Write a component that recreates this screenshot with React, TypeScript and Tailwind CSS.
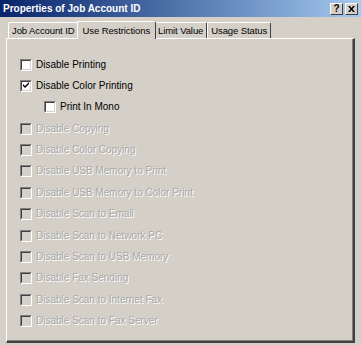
import React from 'react';

const options = [
  { label: 'Disable Printing', checked: false, enabled: true, indent: false },
  { label: 'Disable Color Printing', checked: true, enabled: true, indent: false },
  { label: 'Print In Mono', checked: false, enabled: true, indent: true },
  { label: 'Disable Copying', checked: false, enabled: false, indent: false },
  { label: 'Disable Color Copying', checked: false, enabled: false, indent: false },
  { label: 'Disable USB Memory to Print', checked: false, enabled: false, indent: false },
  { label: 'Disable USB Memory to Color Print', checked: false, enabled: false, indent: false },
  { label: 'Disable Scan to Email', checked: false, enabled: false, indent: false },
  { label: 'Disable Scan to Network PC', checked: false, enabled: false, indent: false },
  { label: 'Disable Scan to USB Memory', checked: false, enabled: false, indent: false },
  { label: 'Disable Fax Sending', checked: false, enabled: false, indent: false },
  { label: 'Disable Scan to Internet Fax', checked: false, enabled: false, indent: false },
  { label: 'Disable Scan to Fax Server', checked: false, enabled: false, indent: false },
];

const tabs = ['Job Account ID', 'Use Restrictions', 'Limit Value', 'Usage Status'];

const CheckBox: React.FC<{ checked: boolean; enabled: boolean }> = ({ checked, enabled }) => (
  <div className="w-[12px] h-[12px] border-t border-l border-[#808080] border-r border-b border-r-white border-b-white shrink-0">
    <div
      className={`w-full h-full border-t border-l border-[#404040] border-r border-b border-r-[#d4d0c8] border-b-[#d4d0c8] flex items-center justify-center ${
        enabled ? 'bg-white' : 'bg-[#d4d0c8]'
      }`}
    >
      {checked && (
        <svg width="7" height="7" viewBox="0 0 7 7">
          <path d="M0 2 L2 4 L6 0 L6 2 L2 6 L0 4 Z" fill="#000" />
        </svg>
      )}
    </div>
  </div>
);

export default function App() {
  return (
    <div className="w-[361px] h-[345px] bg-[#d4d0c8] flex flex-col overflow-hidden" style={{ fontFamily: '"Liberation Sans", Arial, sans-serif' }}>
      {/* title bar */}
      <div className="h-[17px] bg-gradient-to-r from-[#0a246a] to-[#a6caf0] flex items-center justify-between pl-[3px] pr-[3px] shrink-0">
        <span className="text-white text-[10px] font-bold leading-none">Properties of Job Account ID</span>
        <div className="flex gap-[2px]">
          {['?', '×'].map((c) => (
            <div
              key={c}
              className="w-[13px] h-[12px] bg-[#d4d0c8] border-t border-l border-white border-r border-b border-r-[#404040] border-b-[#404040] flex items-center justify-center text-[10px] font-bold text-black leading-none"
            >
              {c === '×' ? (
                <svg width="7" height="6" viewBox="0 0 7 6">
                  <path d="M0 0 L2 0 L3.5 2 L5 0 L7 0 L4.5 3 L7 6 L5 6 L3.5 4 L2 6 L0 6 L2.5 3 Z" fill="#000" />
                </svg>
              ) : (
                c
              )}
            </div>
          ))}
        </div>
      </div>

      {/* tabs */}
      <div className="flex items-end pl-[8px] mt-[3px] h-[18px] shrink-0 relative z-10">
        {tabs.map((t, i) => {
          const active = i === 1;
          return (
            <div
              key={t}
              className={`flex items-center border-t border-l border-white border-r border-r-[#404040] rounded-t-[2px] text-[9.5px] tracking-[-0.1px] text-black leading-none ${
                active ? 'h-[18px] px-[5px] -mb-px bg-[#d4d0c8] -mx-[2px] relative z-10' : 'h-[16px] px-[3px]'
              }`}
            >
              {t}
            </div>
          );
        })}
      </div>

      {/* panel */}
      <div className="flex-1 mx-[6px] mb-[2px] border-t border-l border-white border-r-2 border-b-2 border-r-[#404040] border-b-[#404040]">
        <div className="h-full border-r border-b border-[#808080] pt-[19px] pl-[13px] flex flex-col gap-[8.4px]">
          {options.map((o) => (
            <div key={o.label} className={`flex items-center gap-[4px] h-[13px] ${o.indent ? 'pl-[24px]' : ''}`}>
              <CheckBox checked={o.checked} enabled={o.enabled} />
              <span
                className={`text-[10px] leading-none ${o.enabled ? 'text-black' : 'text-[#a8a8a8] [text-shadow:1px_1px_0_#fff]'}`}
              >
                {o.label}
              </span>
            </div>
          ))}
        </div>
      </div>
    </div>
  );
}
